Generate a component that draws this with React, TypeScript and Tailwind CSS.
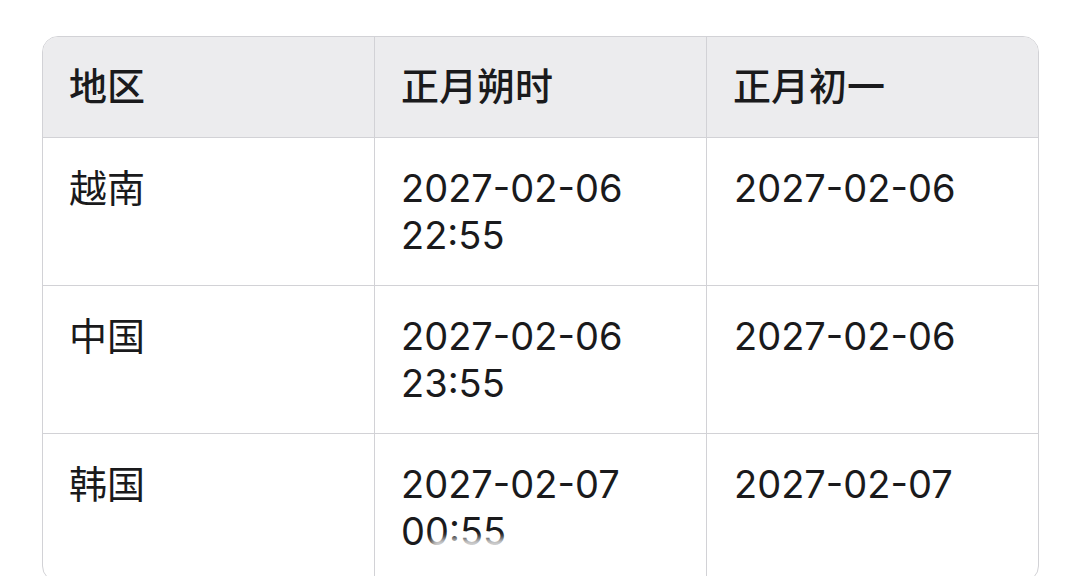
const rows = [
  { region: '越南', shuo: ['2027-02-06', '22:55'], day: '2027-02-06' },
  { region: '中国', shuo: ['2027-02-06', '23:55'], day: '2027-02-06' },
  { region: '韩国', shuo: ['2027-02-07', '00:55'], day: '2027-02-07' },
];

const font = { fontFamily: 'Inter, "Noto Sans CJK SC", sans-serif' };

export default function App() {
  return (
    <div className="w-[1080px] h-[576px] bg-white overflow-hidden pt-[36px] pl-[42px]" style={font}>
      <div className="w-[997px] rounded-[16px] border border-[#d2d2d6] overflow-hidden text-[#1a1a1c]">
        {/* header */}
        <div className="grid grid-cols-[331px_332px_332px] bg-[#ececee] border-b border-[#d2d2d6]">
          {['地区', '正月朔时', '正月初一'].map((h, i) => (
            <div
              key={h}
              className={`h-[100px] flex items-center pl-[26px] pb-[2px] text-[38px] font-medium leading-[47px] ${i > 0 ? 'border-l border-[#d2d2d6]' : ''}`}
            >
              {h}
            </div>
          ))}
        </div>
        {rows.map((r, idx) => (
          <div
            key={r.region}
            className={`grid grid-cols-[331px_332px_332px] ${idx < rows.length - 1 ? 'border-b border-[#d2d2d6]' : ''}`}
          >
            <div className="h-[147px] pt-[27px] pl-[26px] text-[38px] leading-[47px]">{r.region}</div>
            <div className="relative h-[147px] pt-[27px] pl-[26px] text-[38px] leading-[47px] border-l border-[#d2d2d6]">
              <div>{r.shuo[0]}</div>
              <div>{r.shuo[1]}</div>
              {idx === 2 && (
                <div className="absolute left-[56px] top-[104px] w-[205px] h-[36px] bg-white/80 blur-[3px]" />
              )}
            </div>
            <div className="h-[147px] pt-[27px] pl-[27px] text-[38px] leading-[47px] border-l border-[#d2d2d6]">{r.day}</div>
          </div>
        ))}
      </div>
    </div>
  );
}
